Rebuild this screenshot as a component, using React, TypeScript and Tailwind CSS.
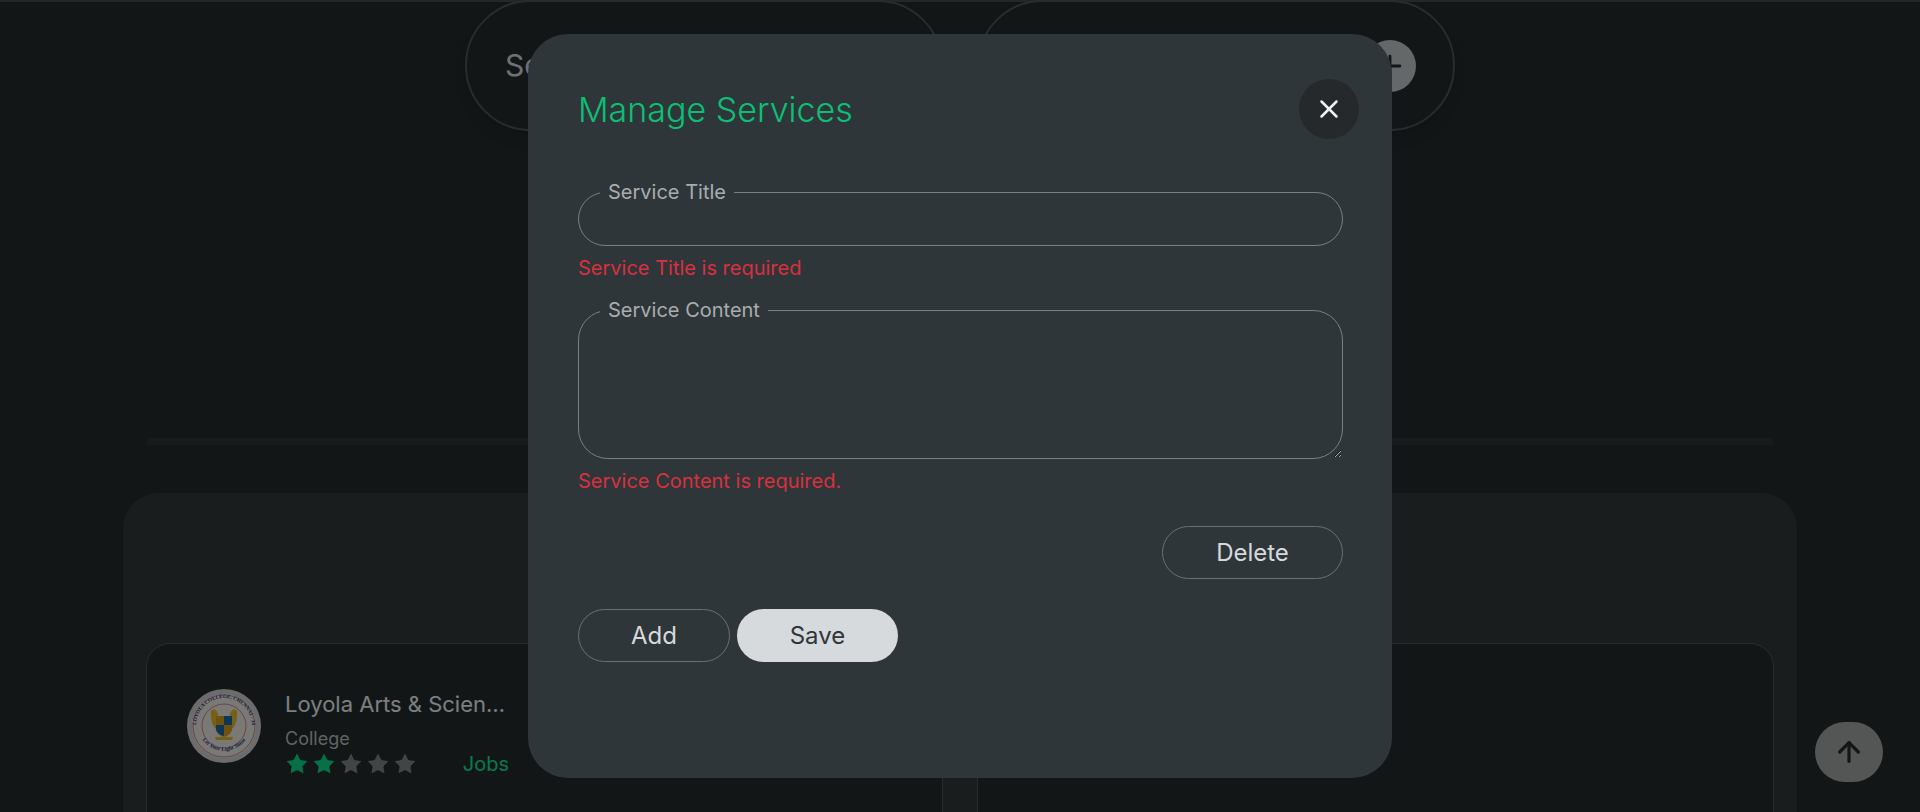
import { X, Plus, ArrowUp, Star } from 'lucide-react';

function Stars({ filled }: { filled: number }) {
  return (
    <div className="flex gap-[3px]">
      {[0, 1, 2, 3, 4].map((i) => (
        <Star
          key={i}
          size={24}
          strokeWidth={0}
          className={i < filled ? 'fill-[#0ce08f]' : 'fill-[#84898b]'}
        />
      ))}
    </div>
  );
}

function CollegeLogo() {
  return (
    <svg width="74" height="74" viewBox="0 0 74 74" className="shrink-0">
      <defs>
        <path id="topArc" d="M9 37a28 28 0 0 1 56 0" />
        <path id="bottomArc" d="M11 42a27 27 0 0 0 52 0" />
      </defs>
      <circle cx="37" cy="37" r="37" fill="#d8d8d8" />
      <circle cx="37" cy="37" r="32" fill="#f4f2ec" />
      <circle cx="37" cy="37" r="22" fill="none" stroke="#b5485a" strokeWidth="0.6" />
      <circle cx="37" cy="37" r="31" fill="none" stroke="#b5485a" strokeWidth="0.6" />
      <text fontSize="5.2" fontWeight="700" fill="#1c3f7c" fontFamily="Liberation Serif, serif">
        <textPath href="#topArc" startOffset="50%" textAnchor="middle">LOYOLA COLLEGE, CHENNAI - 34</textPath>
      </text>
      <text fontSize="5.6" fontWeight="700" fill="#1c3f7c" fontFamily="Liberation Serif, serif">
        <textPath href="#bottomArc" startOffset="50%" textAnchor="middle">Let Your Light Shine</textPath>
      </text>
      <path d="M24 22c3-3 6-1 7 3l-2 15c-3-2-6-10-5-18zM50 22c-3-3-6-1-7 3l2 15c3-2 6-10 5-18z" fill="#e9c22e" />
      <path d="M29 27h16v13c0 4-4 7-8 8-4-1-8-4-8-8z" fill="#e3a51a" />
      <path d="M37 27h8v9h-8zM29 36h8v11c-4-1-8-4-8-7z" fill="#1b6cb3" />
      <path d="M28 48h18l-1 3H29z" fill="#e9c22e" />
    </svg>
  );
}

function Card({ title, type, filled, label }: { title: string; type: string; filled: number; label: string }) {
  return (
    <div className="w-[797px] h-[300px] bg-[#242c2e] border border-[#50585a] rounded-[24px] pl-[40px] pt-[45px] flex gap-[24px]">
      <CollegeLogo />
      <div className="w-[224px]">
        <div className="text-[22px] leading-[30px] text-[#f9ffff] truncate">{title}</div>
        <div className="text-[18px] leading-[24px] mt-[8px] text-[#c0c6c8]">{type}</div>
        <div className="flex items-center justify-between w-[224px] mt-[1px]">
          <Stars filled={filled} />
          <span className="text-[20px] leading-[24px] text-[#14f09c] whitespace-nowrap">{label}</span>
        </div>
      </div>
    </div>
  );
}

function Field({ label, error, multiline }: { label: string; error: string; multiline?: boolean }) {
  return (
    <div>
      <fieldset className={`border border-[#7a7f82] ${multiline ? 'rounded-[30px]' : 'rounded-[27px]'}`}>
        <legend className="ml-[21px] px-[8px] text-[20px] leading-[24px] text-[#a9adb0]">{label}</legend>
        {multiline ? (
          <textarea className="block w-full h-[136px] bg-transparent outline-none resize-y rounded-[30px]" />
        ) : (
          <input className="block w-full h-[41px] bg-transparent outline-none" />
        )}
      </fieldset>
      <p className="text-[20px] leading-[30px] mt-[7px] text-[#d9303f]">{error}</p>
    </div>
  );
}

export default function App() {
  return (
    <div className="relative h-[812px] overflow-hidden bg-[#242c2e] font-[Inter]">
      {/* page behind the dialog */}
      <div className="flex justify-center gap-[34px] border-t-2 border-[#464e50]">
        <div className="w-[478px] h-[131px] -mt-[2px] rounded-[66px] border-2 border-[#50585a] flex items-center pl-[38px] shadow-lg">
          <span className="text-[30px] text-[#dce2e4]">Services</span>
        </div>
        <div className="w-[478px] h-[131px] -mt-[2px] rounded-[66px] border-2 border-[#50585a] flex items-center justify-end pr-[37px] shadow-lg">
          <span className="w-[52px] h-[52px] rounded-full bg-[#c8d0d0] flex items-center justify-center">
            <Plus size={34} strokeWidth={2} className="text-[#242c2e]" />
          </span>
        </div>
      </div>

      <div className="mt-[307px] mx-[147px] h-[7px] bg-[#2e3638]" />

      <div className="mt-[48px] mx-[123px] pt-[150px] px-[23px] h-[400px] rounded-[36px] bg-[#323a3c]">
        <div className="flex justify-between">
          <Card title="Loyola Arts & Science College" type="College" filled={2} label="Jobs" />
          <Card title="Loyola Arts & Science College" type="College" filled={1} label="Projects" />
        </div>
      </div>

      <button className="absolute left-[1815px] top-[722px] w-[68px] h-[60px] rounded-[30px] bg-[#a6acaa] flex items-center justify-center">
        <ArrowUp size={32} strokeWidth={2.4} className="text-[#242c2e]" />
      </button>

      {/* dialog */}
      <div className="absolute inset-0 bg-black/50 flex items-center justify-center">
        <div className="w-[864px] h-[744px] rounded-[40px] bg-[#2f3639] pt-[45px] px-[49px] pl-[50px]">
          <div className="flex items-center justify-between h-[60px]">
            <h2 className="text-[34px] font-light text-[#0bc076]">Manage Services</h2>
            <button className="w-[60px] h-[60px] -mr-[16px] rounded-full bg-[#25292b] flex items-center justify-center">
              <X size={30} strokeWidth={2} className="text-[#f0f2f2]" />
            </button>
          </div>

          <div className="mt-[41px] flex flex-col gap-[15px]">
            <Field label="Service Title" error="Service Title is required" />
            <Field label="Service Content" error="Service Content is required." multiline />
          </div>

          <div className="flex justify-end mt-[30px]">
            <button className="w-[181px] h-[53px] rounded-full border border-[#6b7073] text-[24px] text-[#d6d9dc]">
              Delete
            </button>
          </div>

          <div className="flex gap-[7px] mt-[30px]">
            <button className="w-[152px] h-[53px] rounded-full border border-[#6b7073] text-[24px] text-[#d6d9dc]">
              Add
            </button>
            <button className="w-[161px] h-[53px] rounded-full bg-[#d6dadd] text-[24px] text-[#2f3639]">
              Save
            </button>
          </div>
        </div>
      </div>
    </div>
  );
}
